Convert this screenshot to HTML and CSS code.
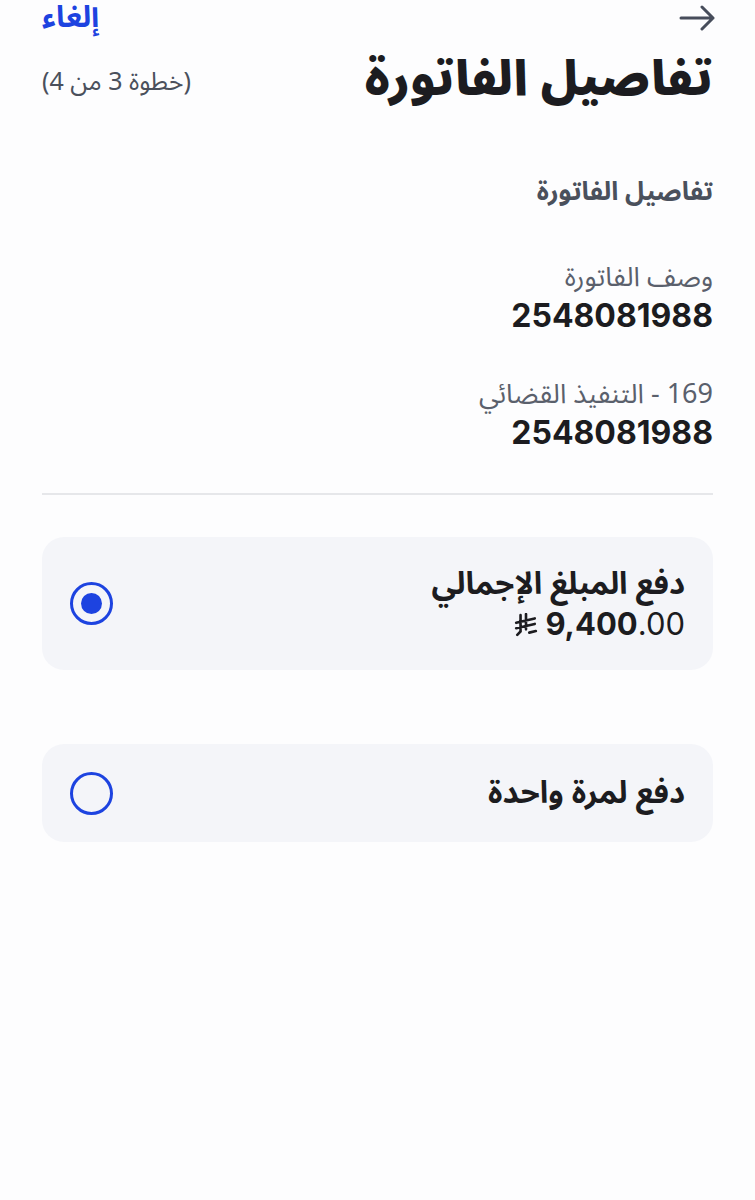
FILE: index.html
```html
<html dir="rtl" lang="ar">
<head>
<meta name="viewport" content="width=device-width, initial-scale=1.0">
<link rel="stylesheet" href="styles.css">
</head>
<body>
<div class="page">

<div class="topbar">
<svg class="back" width="38" height="26" viewBox="0 0 38 26"><path d="M2 13H34M23 2L34 13L23 24" fill="none" stroke="#474d5b" stroke-width="3" stroke-linecap="round" stroke-linejoin="round"/></svg>
<span class="cancel">إلغاء</span>
</div>

<div class="titlerow">
<h1 class="title">تفاصيل الفاتورة</h1>
<span class="step">(خطوة 3 من 4)</span>
</div>

<div class="section">تفاصيل الفاتورة</div>

<div class="field">
<div class="label">وصف الفاتورة</div>
<div class="value">2548081988</div>
</div>

<div class="field">
<div class="label">169 - التنفيذ القضائي</div>
<div class="value">2548081988</div>
</div>

<div class="divider"></div>

<div class="option big">
<div class="optext">
<div class="optitle">دفع المبلغ الإجمالي</div>
<div class="amount" dir="ltr"><svg class="riyal" width="24" height="24" viewBox="0 0 22 22"><path d="M6 2V17L3 20M11 1V15M2 9L19 5M2 14L19 10M14 18L20 16.5" fill="none" stroke="#1c1c20" stroke-width="2.4" stroke-linecap="round"/></svg><span><b>9,400</b>.00</span></div>
</div>
<span class="radio on"></span>
</div>

<div class="option">
<div class="optext">
<div class="optitle">دفع لمرة واحدة</div>
</div>
<span class="radio"></span>
</div>

</div>
</body>
</html>
```

FILE: styles.css
```css
* {
    box-sizing: border-box;
}

body{
margin:0;
background:#fdfdfe;
font-family:"Noto Sans Arabic","DejaVu Sans","Noto Sans",sans-serif;
color:#1c1c20;
}

.page{
padding:0 42px;
}

.topbar{
display:flex;
justify-content:space-between;
align-items:center;
height:34px;
padding-top:2px;
}

.back{
margin-right:-4px;
}

.cancel{
color:#1d43e0;
font-size:30px;
font-weight:bold;
line-height:40px;
}

.titlerow{
display:flex;
justify-content:space-between;
align-items:center;
margin-top:14px;
}

.title{
margin:0;
font-size:48px;
font-weight:900;
line-height:64px;
}

.step{
color:#4a505c;
font-size:25px;
margin-top:4px;
}

.section{
margin-top:62px;
color:#4a505c;
font-size:26px;
font-weight:bold;
line-height:36px;
}

.field{
margin-top:50px;
}

.field + .field{
margin-top:41px;
}

.label{
color:#5a606c;
font-size:27px;
line-height:36px;
}

.value{
font-size:32px;
font-weight:bold;
line-height:40px;
font-family:"Inter","Noto Sans",sans-serif;
direction:ltr;
text-align:right;
}

.divider{
height:2px;
background:#e6e7ea;
margin-top:40px;
}

.option{
display:flex;
justify-content:space-between;
align-items:center;
background:#f4f5f9;
border-radius:22px;
padding:0 28px;
height:98px;
margin-top:74px;
}

.option.big{
height:133px;
margin-top:42px;
}

.optitle{
font-size:31px;
font-weight:bold;
line-height:40px;
}

.amount{
font-size:31px;
line-height:40px;
font-family:"Inter","Noto Sans",sans-serif;
display:flex;
justify-content:flex-end;
align-items:center;
gap:7px;
}

.riyal{
margin-top:2px;
}

.radio{
width:43px;
height:43px;
border-radius:50%;
border:3px solid #1d43e0;
display:flex;
align-items:center;
justify-content:center;
}

.radio.on::after{
content:"";
width:21px;
height:21px;
border-radius:50%;
background:#1d43e0;
}
```
